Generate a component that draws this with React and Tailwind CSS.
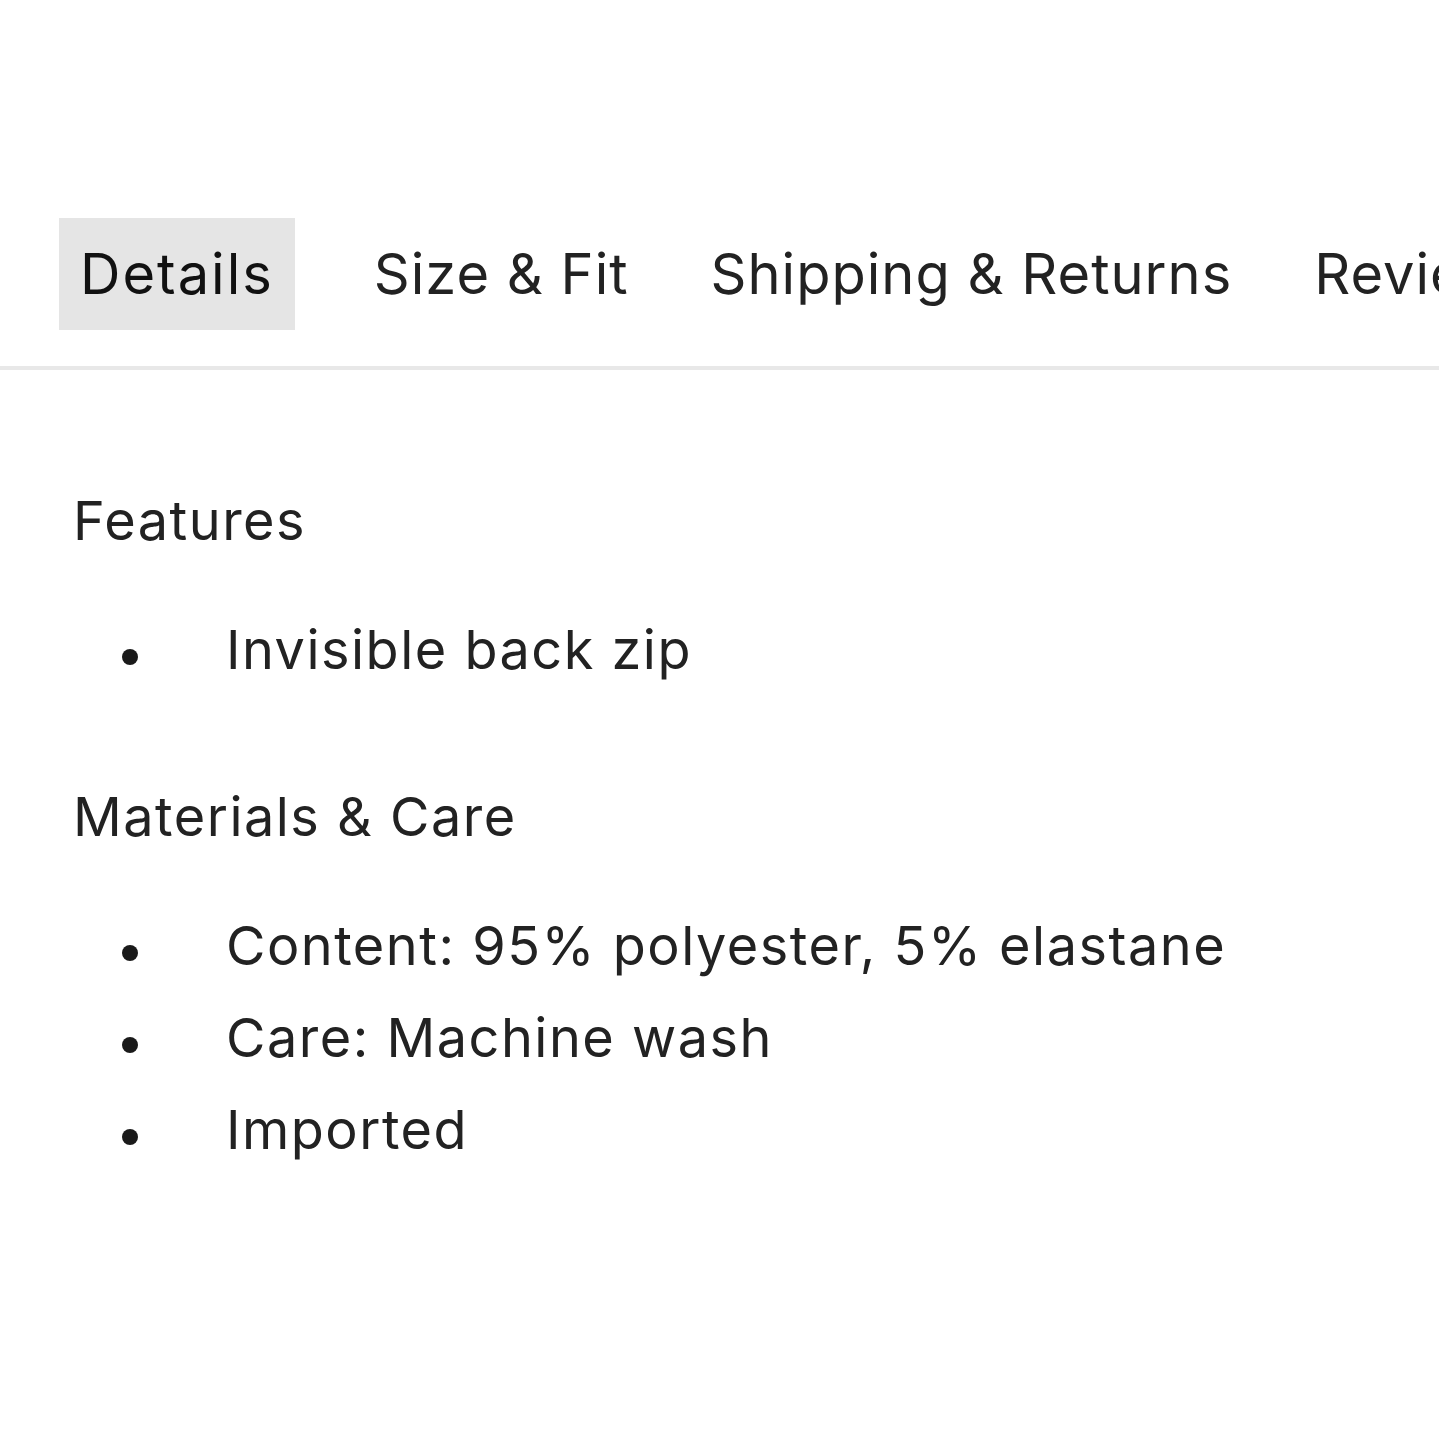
import { useState } from "react";

const tabs = ["Details", "Size & Fit", "Shipping & Returns", "Reviews"];

const sections = [
  { title: "Features", items: ["Invisible back zip"] },
  {
    title: "Materials & Care",
    items: ["Content: 95% polyester, 5% elastane", "Care: Machine wash", "Imported"],
  },
];

function Bullet({ children }) {
  return (
    <li className="flex items-center h-[92px] pl-[49px]">
      <span className="w-[16px] h-[16px] mt-[14px] rounded-full bg-[#1a1a1a] shrink-0" />
      <span className="ml-[88px] whitespace-nowrap">{children}</span>
    </li>
  );
}

export default function App() {
  const [active, setActive] = useState("Details");

  return (
    <div
      className="w-[1439px] h-[1440px] overflow-hidden bg-white text-[#222222] tracking-[1.5px]"
      style={{ fontFamily: "Inter, 'Noto Sans', sans-serif" }}
    >
      {/* tabs */}
      <div className="pt-[218px] pl-[59px] pb-[36px] border-b-4 border-[#e8e8e8]">
        <div className="flex gap-[42px] whitespace-nowrap">
          {tabs.map((t, i) => (
            <button
              key={t}
              onClick={() => setActive(t)}
              className={`h-[112px] flex items-center text-[56px] shrink-0 ${
                i === 0 ? "mr-[17px] px-[21px] tracking-[2px]" : "px-[20px] tracking-[1px]"
              } ${active === t ? "bg-[#e5e5e5] text-[#111111]" : "text-[#222222]"}`}
            >
              {t}
            </button>
          ))}
        </div>
      </div>

      {/* details body */}
      <div className="pt-[105px] pl-[73px] text-[54px] leading-[92px]">
        {sections.map((s, i) => (
          <div key={s.title} className={i > 0 ? "mt-[75px]" : ""}>
            <h3 className="h-[92px]">{s.title}</h3>
            <ul className="mt-[37px]">
              {s.items.map((item) => (
                <Bullet key={item}>{item}</Bullet>
              ))}
            </ul>
          </div>
        ))}
      </div>
    </div>
  );
}
